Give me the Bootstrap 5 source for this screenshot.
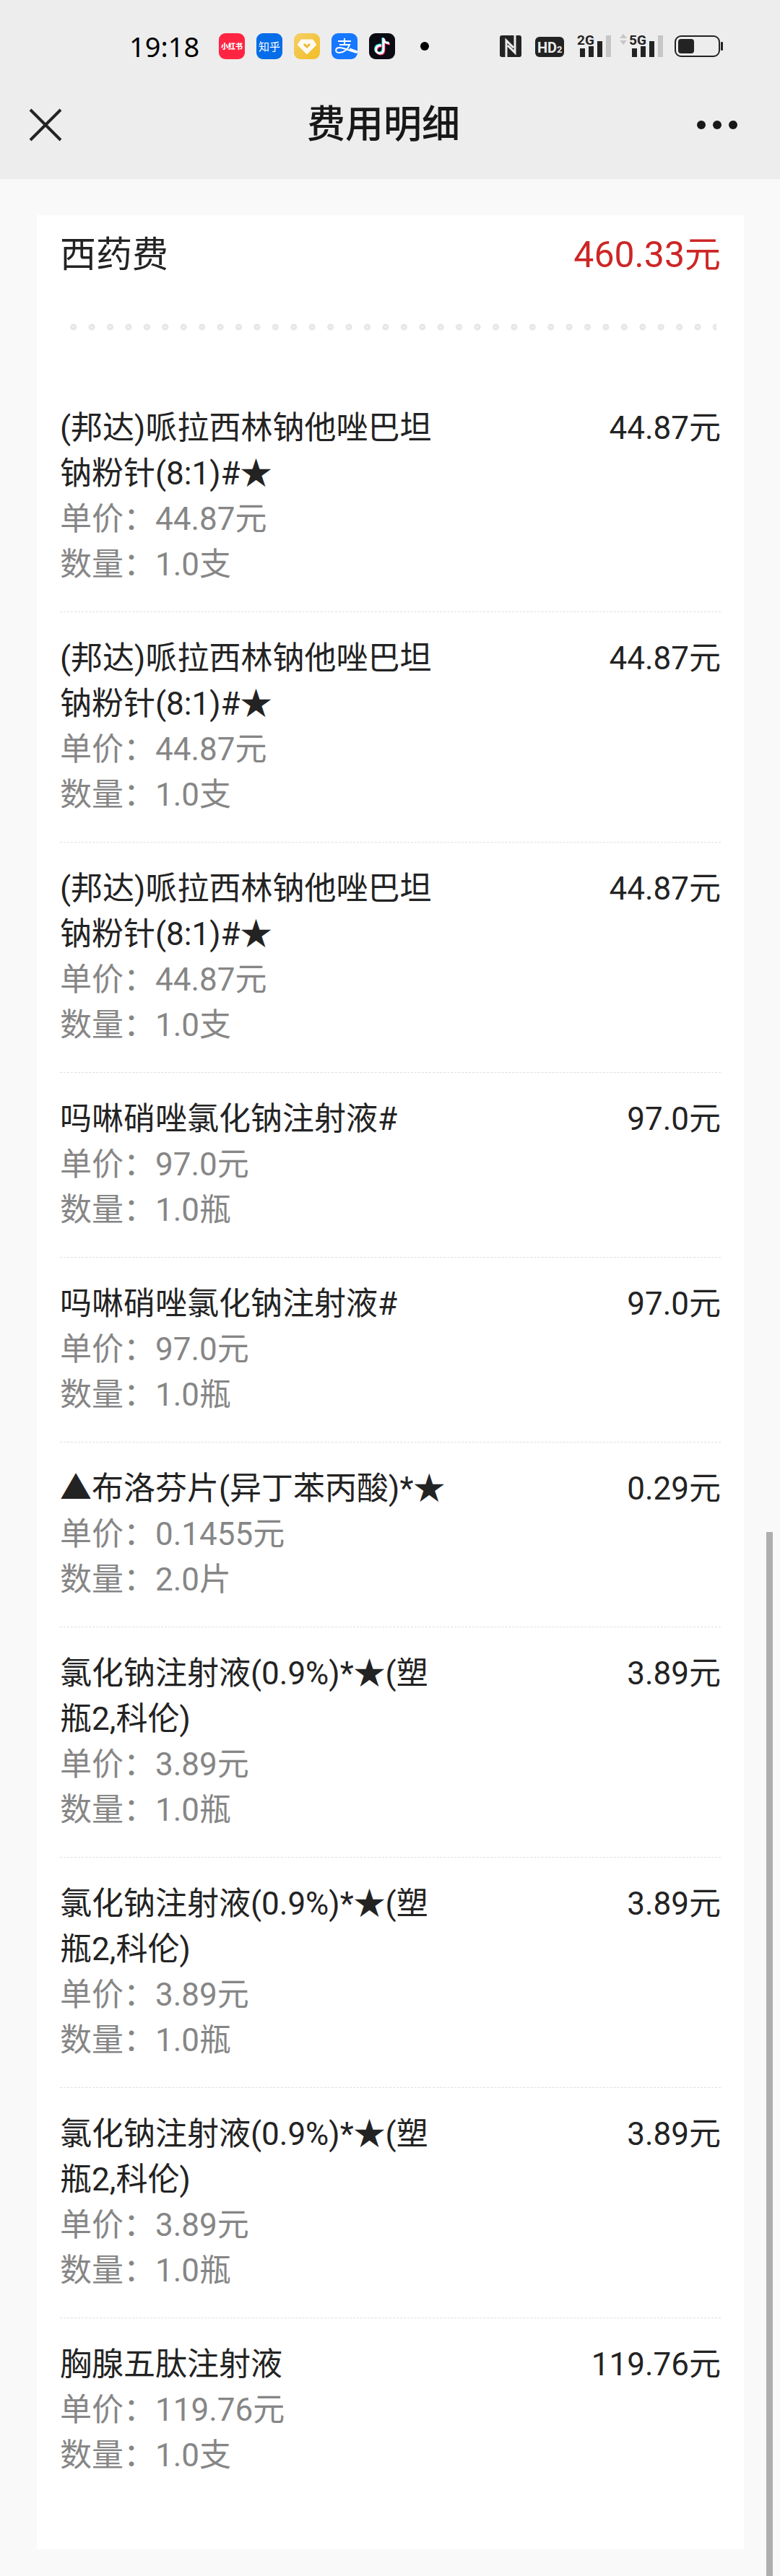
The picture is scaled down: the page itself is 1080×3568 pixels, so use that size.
<!DOCTYPE html>
<html lang="zh-CN">
<head>
<meta charset="utf-8">
<meta name="viewport" content="width=device-width, initial-scale=1">
<title>费用明细</title>
<link href="https://cdn.jsdelivr.net/npm/bootstrap@5.3.0/dist/css/bootstrap.min.css" rel="stylesheet">
<style>
  body { background: #f9f9f9; color: #232323; font-family: Roboto, "Noto Sans CJK SC", sans-serif; font-size: 44px; line-height: 63px; }
  .top-area { background: #ededed; color: #000; }
  .status-bar { height: 128px; padding: 0 76px 0 179px; }
  .clock { font-family: "Noto Sans", sans-serif; font-size: 38px; line-height: 48px; width: 124px; }
  .app-icons { gap: 16px; }
  .title-bar { height: 120px; padding: 0 58px 30px 40px; color: #181818; }
  .title-bar h1 { font-size: 53px; line-height: 72px; }
  .bar-side { flex: 1 1 0; }
  .icon-btn { line-height: 0; }
  .sheet { margin: 50px 50px 37px 51px; padding: 0 32px 65px; background: #fff; }
  .total-row { font-size: 50px; line-height: 70px; padding: 20px 0 60px; }
  .total-sum { color: #cd2626; }
  .dots { height: 10px; margin: 0 6px 71px; background: radial-gradient(circle, #f0f0f0 1px, #e4e4e4 3px, #e6e6e6 4px, transparent 5px) 0 0 / calc(100% / 35.5) 100% repeat-x; }
  .fee-item { padding: 33px 0; border-bottom: 1px dashed #dedede; }
  .fee-item:last-child { border-bottom: 0; }
  .fee-name { width: 540px; }
  .fee-meta { color: #868686; }
  .scroll-thumb { right: 10px; top: 2122px; bottom: 0; width: 9px; background: #aeaeae; }
</style>
</head>
<body class="position-relative">
<header class="top-area">
  <div class="status-bar d-flex align-items-center justify-content-between">
    <div class="d-flex align-items-center">
      <span class="clock">19:18</span>
      <div class="app-icons d-flex align-items-center">
        <svg width="36" height="36" viewBox="0 0 36 36" role="img" aria-label="小红书"><rect width="36" height="36" rx="9" fill="#ff2442"/><text x="18" y="22" text-anchor="middle" font-family="Noto Sans CJK SC, sans-serif" font-weight="900" font-size="10" fill="#fff">小红书</text></svg>
        <svg width="36" height="36" viewBox="0 0 36 36" role="img" aria-label="知乎"><rect width="36" height="36" rx="9" fill="#056de8"/><text x="18" y="24" text-anchor="middle" font-family="Noto Sans CJK SC, sans-serif" font-weight="400" font-size="15" fill="#fff">知乎</text></svg>
        <svg width="36" height="36" viewBox="0 0 36 36" role="img" aria-label="钻石"><defs><linearGradient id="gold" x2="1" y2="1"><stop stop-color="#f4cf66"/><stop offset="1" stop-color="#f2bd24"/></linearGradient></defs><rect width="36" height="36" rx="9" fill="url(#gold)"/><path d="M10 9h16l5 7-13 13L5 16z" fill="#fffaf0" stroke="#fffaf0" stroke-width="1" stroke-linejoin="round"/><path d="M14 15l4 4 4-4" fill="none" stroke="#ecb92f" stroke-width="3"/></svg>
        <svg width="36" height="36" viewBox="0 0 36 36" role="img" aria-label="支付宝"><rect width="36" height="36" rx="9" fill="#1677ff"/><g fill="none" stroke="#fff" stroke-width="2"><path d="M9 11h18M18 7v9M11 16h14c-2 6-8 11-14 11-7 0-6-7 0-7 6 0 13 4 24 7"/><path d="M25 22l11 4" stroke-width="3"/></g></svg>
        <svg width="36" height="36" viewBox="0 0 36 36" role="img" aria-label="抖音"><rect width="36" height="36" rx="9" fill="#0c0b14"/><g fill="none" stroke-width="3"><path d="M16 16c-9-1-10 11-2 11 4 0 5-3 5-6V6c0 4 3 7 8 7" stroke="#25f4ee"/><path d="M18 18c-9-1-10 11-2 11 4 0 5-3 5-6V8c0 4 3 7 8 7" stroke="#fe2c55"/><path d="M17 17c-9-1-10 11-2 11 4 0 5-3 5-6V7c0 4 3 7 8 7" stroke="#fff"/></g></svg>
        <svg width="48" height="36" viewBox="0 0 48 36" aria-hidden="true"><circle cx="25" cy="18" r="6"/></svg>
      </div>
    </div>
    <svg width="312" height="52" viewBox="0 -9 312 52" role="img" aria-label="NFC HD 2G 5G 电池" fill="#232323" font-family="Roboto, sans-serif" font-weight="700">
      <rect y="2" width="30" height="30" rx="3"/>
      <path d="M9 32V9l10 10M21 2v24L11 16" fill="none" stroke="#ededed" stroke-width="3"/>
      <rect x="49" y="4" width="40" height="28" rx="6"/>
      <text x="52" y="26" font-size="20" fill="#ededed">HD</text><text x="79" y="26" font-size="13" fill="#ededed">2</text>
      <text x="107" y="15" font-size="19">2G</text>
      <path d="M111 20h7v12h-7zM123 17h7v15h-7zM135 10h7v22h-7z"/><path d="M147 2h7v30h-7z" fill="#c6c6c6"/>
      <path d="M171 0l5 6h-10zM171 15l5-6h-10z" fill="#c6c6c6"/>
      <text x="179" y="15" font-size="19">5G</text>
      <path d="M183 20h7v12h-7zM195 17h7v15h-7zM207 10h7v22h-7z"/><path d="M219 2h7v30h-7z" fill="#c6c6c6"/>
      <rect x="243" y="3" width="61" height="28" rx="8" fill="none" stroke="#232323" stroke-width="2"/><rect x="247" y="7" width="22" height="20" rx="4"/><rect x="306" y="11" width="3" height="12" rx="1"/>
    </svg>
  </div>
  <div class="title-bar d-flex align-items-center">
    <div class="bar-side d-flex"><button type="button" class="icon-btn btn btn-link p-0 border-0" aria-label="关闭"><svg width="46" height="46" viewBox="0 0 46 46" fill="none" stroke="#232323" stroke-width="4"><path d="M2 2l42 42M44 2L2 44"/></svg></button></div>
    <h1 class="m-0 fw-medium">费用明细</h1>
    <div class="bar-side d-flex justify-content-end"><button type="button" class="icon-btn btn btn-link p-0 border-0" aria-label="更多"><svg width="58" height="14" viewBox="0 0 58 14" fill="#181818"><circle cx="7" cy="7" r="6"/><circle cx="29" cy="7" r="6"/><circle cx="51" cy="7" r="6"/></svg></button></div>
  </div>
</header>
<main class="sheet">
  <div class="total-row d-flex justify-content-between"><span>西药费</span><span class="total-sum">460.33元</span></div>
  <div class="dots"></div>
  <section>
    <div class="fee-item d-flex justify-content-between"><div><div class="fee-name">(邦达)哌拉西林钠他唑巴坦钠粉针(8:1)#★</div><div class="fee-meta">单价：44.87元</div><div class="fee-meta">数量：1.0支</div></div><span>44.87元</span></div>
    <div class="fee-item d-flex justify-content-between"><div><div class="fee-name">(邦达)哌拉西林钠他唑巴坦钠粉针(8:1)#★</div><div class="fee-meta">单价：44.87元</div><div class="fee-meta">数量：1.0支</div></div><span>44.87元</span></div>
    <div class="fee-item d-flex justify-content-between"><div><div class="fee-name">(邦达)哌拉西林钠他唑巴坦钠粉针(8:1)#★</div><div class="fee-meta">单价：44.87元</div><div class="fee-meta">数量：1.0支</div></div><span>44.87元</span></div>
    <div class="fee-item d-flex justify-content-between"><div><div class="fee-name">吗啉硝唑氯化钠注射液#</div><div class="fee-meta">单价：97.0元</div><div class="fee-meta">数量：1.0瓶</div></div><span>97.0元</span></div>
    <div class="fee-item d-flex justify-content-between"><div><div class="fee-name">吗啉硝唑氯化钠注射液#</div><div class="fee-meta">单价：97.0元</div><div class="fee-meta">数量：1.0瓶</div></div><span>97.0元</span></div>
    <div class="fee-item d-flex justify-content-between"><div><div class="fee-name">▲布洛芬片(异丁苯丙酸)*★</div><div class="fee-meta">单价：0.1455元</div><div class="fee-meta">数量：2.0片</div></div><span>0.29元</span></div>
    <div class="fee-item d-flex justify-content-between"><div><div class="fee-name">氯化钠注射液(0.9%)*★(塑瓶2,科伦)</div><div class="fee-meta">单价：3.89元</div><div class="fee-meta">数量：1.0瓶</div></div><span>3.89元</span></div>
    <div class="fee-item d-flex justify-content-between"><div><div class="fee-name">氯化钠注射液(0.9%)*★(塑瓶2,科伦)</div><div class="fee-meta">单价：3.89元</div><div class="fee-meta">数量：1.0瓶</div></div><span>3.89元</span></div>
    <div class="fee-item d-flex justify-content-between"><div><div class="fee-name">氯化钠注射液(0.9%)*★(塑瓶2,科伦)</div><div class="fee-meta">单价：3.89元</div><div class="fee-meta">数量：1.0瓶</div></div><span>3.89元</span></div>
    <div class="fee-item d-flex justify-content-between"><div><div class="fee-name">胸腺五肽注射液</div><div class="fee-meta">单价：119.76元</div><div class="fee-meta">数量：1.0支</div></div><span>119.76元</span></div>
  </section>
</main>
<div class="scroll-thumb position-absolute"></div>
<script src="https://cdn.jsdelivr.net/npm/bootstrap@5.3.0/dist/js/bootstrap.bundle.min.js"></script>
</body>
</html>
